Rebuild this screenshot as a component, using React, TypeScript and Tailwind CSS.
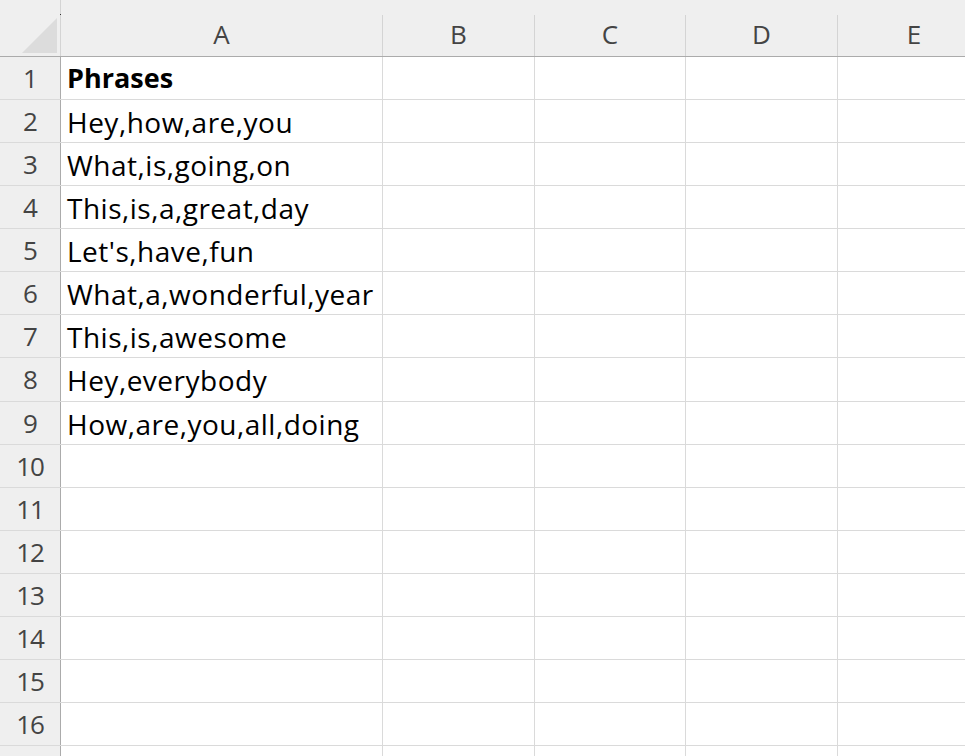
import React from "react";

const phrases = [
  "Phrases",
  "Hey,how,are,you",
  "What,is,going,on",
  "This,is,a,great,day",
  "Let's,have,fun",
  "What,a,wonderful,year",
  "This,is,awesome",
  "Hey,everybody",
  "How,are,you,all,doing",
];

const cols = ["A", "B", "C", "D", "E"];
const colW = ["w-[322px]", "w-[152px]", "w-[151px]", "w-[152px]", "w-[152px]"];

export default function App() {
  const rows = Array.from({ length: 17 }, (_, i) => i + 1);
  return (
    <div
      className="w-[965px] h-[756px] overflow-hidden bg-white"
      style={{ fontFamily: '"Open Sans", "Noto Sans", sans-serif' }}
    >
      {/* header row */}
      <div className="flex h-[57px] bg-[#efefef] border-b border-[#ababab]">
        <div className="w-[61px] h-full shrink-0 border-r border-[#d4d4d4] flex items-end justify-end pr-[3px] pb-[3px] relative">
          <svg width="35" height="35" viewBox="0 0 35 35" className="block">
            <polygon points="35,0 35,35 0,35" fill="#dcdcdc" />
          </svg>
          <div className="absolute left-[60px] top-[14px] w-[1px] h-[1px] bg-[#333]" />
        </div>
        {cols.map((c, i) => (
          <div key={c} className={`${colW[i]} h-full pt-[15px] shrink-0`}>
            <div
              className={`h-full flex items-center justify-center text-[26px] text-[#444] ${
                i < 4 ? "border-r border-[#d4d4d4]" : ""
              }`}
            >
              <span className="-mt-[2px]">{c}</span>
            </div>
          </div>
        ))}
      </div>
      {rows.map((r) => (
        <div
          key={r}
          className={`flex ${r === 8 ? "h-[44px]" : "h-[43px]"} border-b border-[#dadada]`}
        >
          <div className="w-[61px] h-full shrink-0 bg-[#efefef] border-r border-[#ababab] flex items-center justify-center text-[26px] text-[#444] tracking-[-1px]">
            {r <= 16 ? r : ""}
          </div>
          {cols.map((c, i) => (
            <div
              key={c}
              className={`${colW[i]} h-full shrink-0 flex items-center pl-[6px] ${
                i < 4 ? "border-r border-[#dadada]" : ""
              }`}
            >
              {i === 0 && r <= 9 ? (
                <span
                  className={`text-black whitespace-nowrap mt-[1px] ${
                    r === 1 ? "font-bold text-[27px]" : "text-[28px] tracking-[0.5px]"
                  }`}
                >
                  {phrases[r - 1]}
                </span>
              ) : null}
            </div>
          ))}
        </div>
      ))}
    </div>
  );
}
